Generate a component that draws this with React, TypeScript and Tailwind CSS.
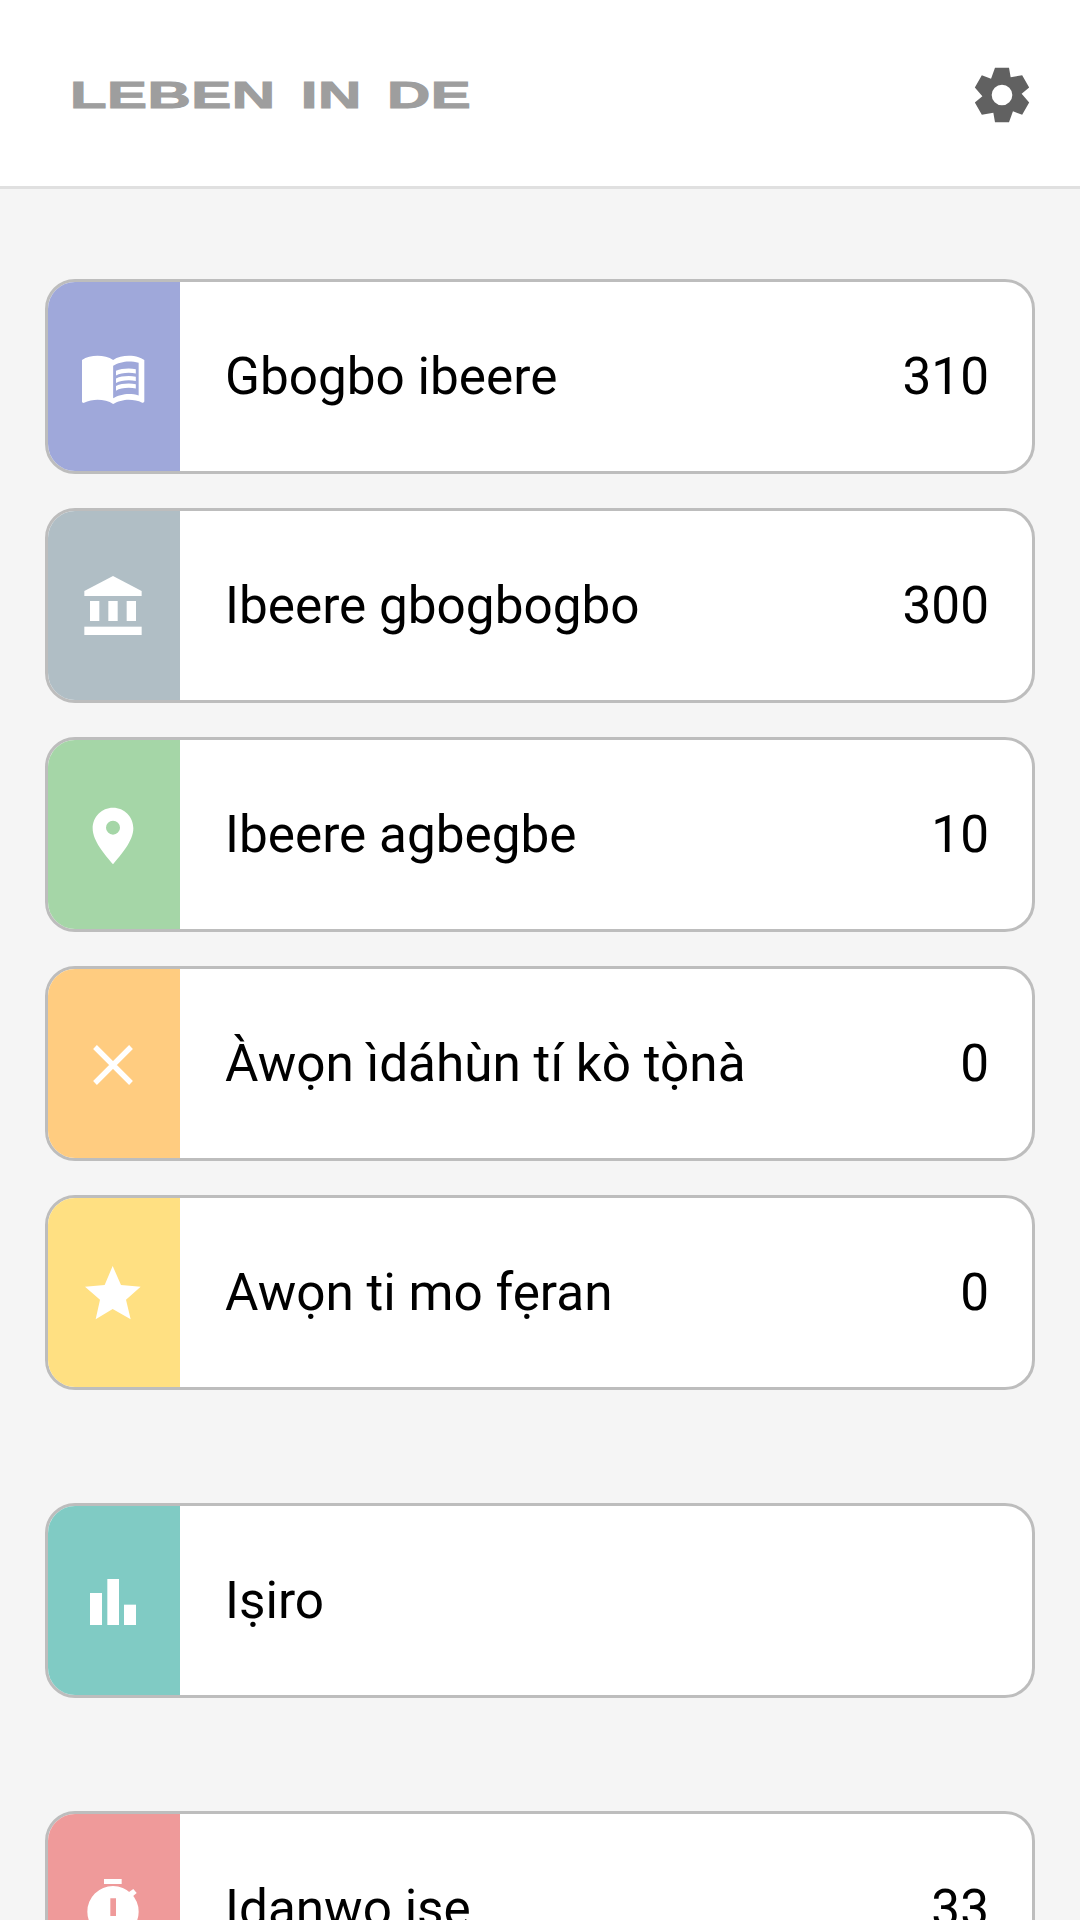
import React from "react";

const gearPath = (() => {
  const cx = 306, cy = 197;
  const rot = (x: number, y: number, a: number) => {
    const c = Math.cos(a), s = Math.sin(a);
    return `${(cx + x * c - y * s).toFixed(1)} ${(cy + x * s + y * c).toFixed(1)}`;
  };
  const pts: string[] = [];
  for (let i = 0; i < 6; i++) {
    const a = (i * Math.PI) / 3;
    pts.push(rot(-21, -82, a), rot(21, -82, a), rot(26, -53, a));
  }
  return `M${pts.join("L")}Z M${cx - 31} ${cy}a31 31 0 1 0 62 0a31 31 0 1 0 -62 0Z`;
})();

function Gear() {
  return (
    <svg viewBox="216 107 180 180" className="w-[60px] h-[60px]">
      <path d={gearPath} fill="#616161" fillRule="evenodd" />
    </svg>
  );
}

function Book() {
  return (
    <svg viewBox="0.3 0 24 24" className="w-[68px] h-[68px]" fill="#fff">
      <path d="M21,5c-1.11-0.35-2.33-0.5-3.5-0.5c-1.95,0-4.05,0.4-5.5,1.5c-1.45-1.1-3.55-1.5-5.5-1.5S2.45,4.9,1,6v14.65c0,0.25,0.25,0.5,0.5,0.5c0.1,0,0.15-0.05,0.25-0.05C3.1,20.45,5.05,20,6.5,20c1.95,0,4.05,0.4,5.5,1.5c1.35-0.85,3.8-1.5,5.5-1.5c1.65,0,3.35,0.3,4.75,1.05c0.1,0.05,0.15,0.05,0.25,0.05c0.25,0,0.5-0.25,0.5-0.5V6C22.4,5.55,21.75,5.25,21,5z M21,18.5c-1.1-0.35-2.3-0.5-3.5-0.5c-1.7,0-4.15,0.65-5.5,1.5V8c1.35-0.85,3.8-1.5,5.5-1.5c1.2,0,2.4,0.15,3.5,0.5V18.5z" />
      <path d="M17.5,10.5c0.88,0,1.73,0.09,2.5,0.26V9.24C19.21,9.09,18.36,9,17.5,9c-1.7,0-3.24,0.29-4.5,0.83v1.66C14.13,10.85,15.7,10.5,17.5,10.5z M13,12.49v1.66c1.13-0.64,2.7-0.99,4.5-0.99c0.88,0,1.73,0.09,2.5,0.26V11.9c-0.79-0.15-1.64-0.24-2.5-0.24C15.8,11.66,14.26,11.96,13,12.49z M17.5,14.33c-1.7,0-3.24,0.29-4.5,0.83v1.66c1.13-0.64,2.7-0.99,4.5-0.99c0.88,0,1.73,0.09,2.5,0.26v-1.52C19.21,14.41,18.36,14.33,17.5,14.33z" />
    </svg>
  );
}

function Bank() {
  return (
    <svg viewBox="144 207 216 216" className="w-[72px] h-[72px]" fill="#fff">
      <polygon points="249,225 335,270 335,285 163,285 163,270" />
      <rect x="180" y="300" width="28" height="60" />
      <rect x="235" y="300" width="28" height="60" />
      <rect x="290" y="300" width="28" height="60" />
      <rect x="163" y="377" width="172" height="25" />
    </svg>
  );
}

function Pin() {
  return (
    <svg viewBox="144 204 216 216" className="w-[72px] h-[72px]" fill="#fff">
      <path
        fillRule="evenodd"
        d="M249 230C215 230 188 257 188 292C188 330 225 372 249 400C273 372 310 330 310 292C310 257 283 230 249 230ZM228 290a21 21 0 1 0 42 0a21 21 0 1 0 -42 0Z"
      />
    </svg>
  );
}

function Cross() {
  return (
    <svg viewBox="144 201 216 216" className="w-[72px] h-[72px]" stroke="#fff" strokeWidth="16" fill="none">
      <path d="M195 258L303 366M303 258L195 366" />
    </svg>
  );
}

function Star() {
  return (
    <svg viewBox="144 888 216 216" className="w-[72px] h-[72px]" fill="#fff">
      <polygon points="248,915 273,972 332,977 288,1016 302,1075 248,1044 197,1075 210,1016 165,977 224,972" />
    </svg>
  );
}

function Bars() {
  return (
    <svg viewBox="144 222 216 216" className="w-[72px] h-[72px]" fill="#fff">
      <rect x="180" y="306" width="36" height="96" />
      <rect x="232" y="264" width="35" height="138" />
      <rect x="282" y="341" width="36" height="61" />
    </svg>
  );
}

function Timer() {
  return (
    <svg viewBox="144 216 216 216" className="w-[72px] h-[72px]" fill="#fff">
      <rect x="222" y="234" width="53" height="15" />
      <path d="M296 274L310 264L320 276L306 288Z" />
      <path
        fillRule="evenodd"
        d="M172 332a77 77 0 1 0 154 0a77 77 0 1 0 -154 0ZM241 292h17v53h-17Z"
      />
    </svg>
  );
}

function Card({
  color,
  icon,
  label,
  count,
}: {
  color: string;
  icon: React.ReactNode;
  label: string;
  count?: string;
}) {
  return (
    <div className="flex h-[195px] shrink-0 overflow-hidden rounded-[30px] border-[3px] border-[#bdbdbd] bg-white">
      <div className={`flex w-[132px] shrink-0 items-center justify-center ${color}`}>{icon}</div>
      <div className="flex flex-1 items-center justify-between pl-[45px] pr-[43px] pt-[1px] text-[51.3px] text-black">
        <span>{label}</span>
        {count && <span>{count}</span>}
      </div>
    </div>
  );
}

export default function App() {
  return (
    <div className="flex h-[1920px] flex-col overflow-hidden bg-[#f5f5f5] font-['Roboto',sans-serif]">
      <header className="flex h-[189px] shrink-0 items-center justify-between overflow-hidden border-b-[3px] border-[#e0e0e0] bg-white pl-[70px] pr-[48px] pt-1">
        <span className="origin-left scale-x-[1.62] whitespace-nowrap font-['Liberation_Sans',sans-serif] text-[37px] font-bold leading-none tracking-[0.3px] text-[#9e9e9e] [word-spacing:5px] [-webkit-text-stroke:1px_#9e9e9e]">
          LEBEN IN DE
        </span>
        <Gear />
      </header>
      <main className="flex flex-col px-[45px] pt-[90px]">
        <div className="flex flex-col gap-[34px]">
          <Card color="bg-[#9fa8da]" icon={<Book />} label="Gbogbo ibeere" count="310" />
          <Card color="bg-[#b0bec5]" icon={<Bank />} label="Ibeere gbogbogbo" count="300" />
          <Card color="bg-[#a5d6a7]" icon={<Pin />} label="Ibeere agbegbe" count="10" />
          <Card color="bg-[#ffcc80]" icon={<Cross />} label="Àwọn ìdáhùn tí kò tọ̀nà" count="0" />
          <Card color="bg-[#ffe082]" icon={<Star />} label="Awọn ti mo fẹran" count="0" />
        </div>
        <div className="mt-[113px]">
          <Card color="bg-[#80cbc4]" icon={<Bars />} label="Iṣiro" />
        </div>
        <div className="mt-[113px]">
          <Card color="bg-[#ef9a9a]" icon={<Timer />} label="Idanwo iṣe" count="33" />
        </div>
      </main>
    </div>
  );
}
